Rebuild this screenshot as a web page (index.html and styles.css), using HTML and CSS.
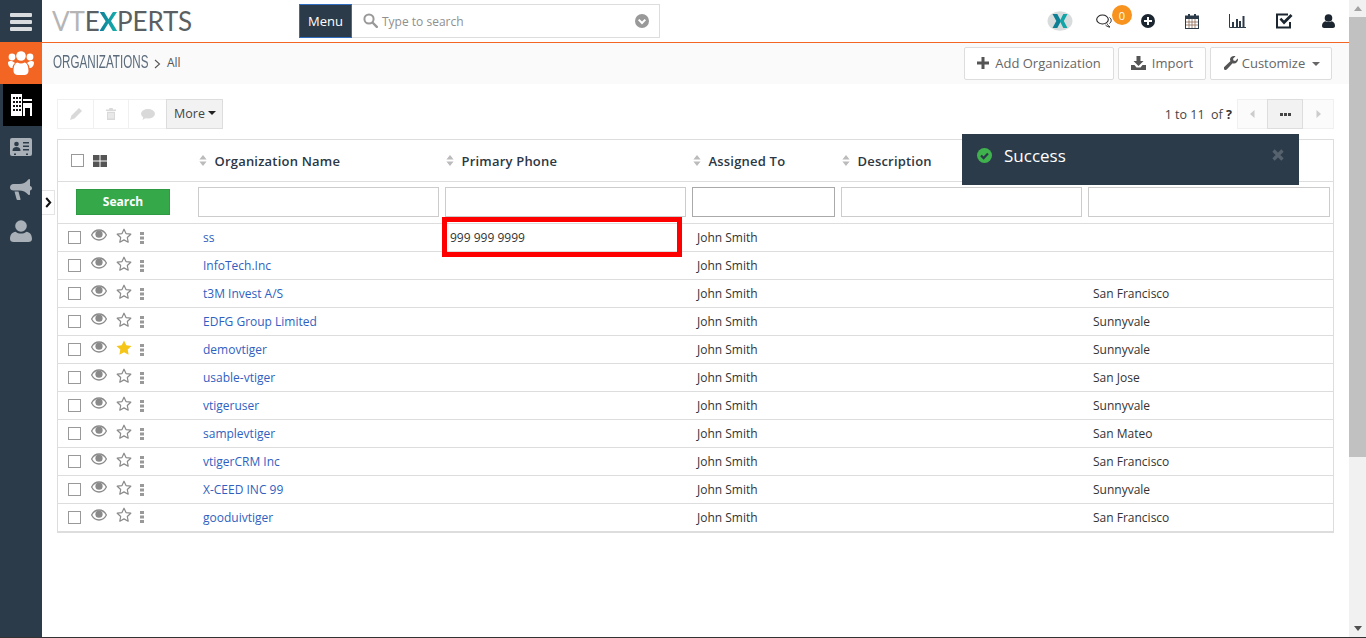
FILE: index.html
```html
<!DOCTYPE html>
<html lang="en">
<head>
<meta charset="utf-8">
<title>Organizations</title>
<link rel="stylesheet" href="styles.css">
</head>
<body>
<svg class="defs" aria-hidden="true">
  <symbol id="i-eye" viewBox="0 0 16 12"><path d="M.6 6C2.4 2.6 5 1 8 1s5.600 1.600 7.400 5C13.600 9.400 11 11 8 11S2.400 9.400.6 6z" fill="none" stroke="currentColor" stroke-width="1.300"/><circle cx="8" cy="5.200" r="3.600" fill="currentColor"/></symbol>
  <symbol id="i-star" viewBox="0 0 16 15"><path d="M8 1.200l2 4.400 4.800.6-3.500 3.300.9 4.700L8 11.900l-4.200 2.300.9-4.700L1.200 6.200 6 5.600z" fill="none" stroke="currentColor" stroke-width="1.200" stroke-linejoin="round"/></symbol>
  <symbol id="i-star-f" viewBox="0 0 16 15"><path d="M8 .6l2.300 4.700 5.200.7-3.800 3.600.9 5.100L8 12.200l-4.600 2.500.9-5.100L.5 6l5.200-.7z" fill="currentColor"/></symbol>
  <symbol id="i-dots" viewBox="0 0 4 12"><path d="M0 0h4v3H0zM0 4.500h4v3H0zM0 9h4v3H0z" fill="currentColor"/></symbol>
  <symbol id="i-sort" viewBox="0 0 8 11"><path d="M4 0l3.600 4.400H.4zM4 11L.4 6.600h7.200z" fill="currentColor"/></symbol>
</svg>

<div class="app">
  <aside class="side">
    <div class="side-head">
      <span class="bar"></span><span class="bar"></span><span class="bar"></span>
    </div>
    <div class="side-item side-org">
      <svg width="26" height="24" viewBox="0 0 26 24"><g fill="#fff"><circle cx="4" cy="6" r="3.400"/><circle cx="22" cy="6" r="3.400"/><circle cx="13" cy="5" r="4.800"/><path d="M0 11.500c0-1 1.500-1.500 3-1.500 2 0 2.500 1 4 2-1.500 1-2.500 3-2.500 5C2 17 0 15 0 11.500zM26 11.500c0-1-1.500-1.500-3-1.500-2 0-2.500 1-4 2 1.500 1 2.500 3 2.500 5 2.500 0 4.500-2 4.500-5.500z"/><path d="M5.500 20c0-5 1.500-8 4-8.500 2 1.200 5 1.200 7 0 2.500.5 4 3.500 4 8.500 0 2.500-2 4-4 4h-7c-2 0-4-1.500-4-4z"/></g></svg>
    </div>
    <div class="side-item side-active">
      <svg width="21" height="22" viewBox="0 0 21 22"><path d="M0 0h11v22H0z" fill="#fff"/><path d="M2 3h2v2H2zM5 3h2v2H5zM8 3h2v2H8zM2 7h2v2H2zM5 7h2v2H5zM8 7h2v2H8zM2 11h2v2H2zM5 11h2v2H5zM8 11h2v2H8zM2 15h2v2H2zM5 15h2v2H5zM8 15h2v2H8z" fill="#111"/><path d="M12 5h9v2h-9zM12 9h9v13h-2v-8h-5v8h-2z" fill="#fff"/></svg>
    </div>
    <div class="side-item">
      <svg width="22" height="18" viewBox="0 0 22 18"><rect width="22" height="18" rx="2" fill="#a9b0b7"/><circle cx="6.500" cy="6" r="2.300" fill="#2c3b49"/><path d="M2.500 13c0-3 1.500-4 4-4s4 1 4 4zM13 4h6v1.500h-6zM13 7.500h6V9h-6zM13 11h6v1.500h-6z" fill="#2c3b49"/><path d="M4 15.500h2V17H4zM16 15.500h2V17h-2z" fill="#2c3b49"/></svg>
    </div>
    <div class="side-item">
      <svg width="22" height="21" viewBox="0 0 22 21"><path d="M19 0c.8 0 1 .6 1 1v6c1.200.3 2 1.200 2 2.300s-.8 2-2 2.300V15c0 .6-.4 1-1 1-.3 0-.5-.1-.7-.3C16 13 13 11.500 9 11.500H3.500C1.500 11.500 0 10.500 0 8.500S1.500 5 3.500 5H9c4 0 7-1.500 9.300-4.500.2-.3.4-.5.7-.5z" fill="#a9b0b7"/><path d="M4.500 12.500h4l2 7.500c.2.700-.3 1-.8 1H7.500c-.4 0-.8-.2-.9-.7z" fill="#a9b0b7"/></svg>
    </div>
    <div class="side-item">
      <svg width="22" height="22" viewBox="0 0 22 22"><circle cx="11" cy="6" r="5.800" fill="#a9b0b7"/><path d="M0 19c0-4.500 2.500-7 5.500-7.300C7 13 9 13.500 11 13.500s4-.5 5.500-1.800c3 .3 5.500 2.800 5.500 7.300 0 2-1.500 3-3.500 3h-15C1.500 22 0 21 0 19z" fill="#a9b0b7"/></svg>
    </div>
  </aside>

  <div class="main">
    <header class="top">
      <div class="logo"><span class="logo-v">VT</span><span class="logo-e">E</span><span class="logo-x">X</span><span class="logo-e">PERTS</span></div>
      <div class="menu-btn">Menu</div>
      <div class="search">
        <svg class="search-ico" width="15" height="15" viewBox="0 0 15 15"><circle cx="6" cy="6" r="4.600" fill="none" stroke="#999" stroke-width="2"/><path d="M9.500 9.500l4.300 4.300" stroke="#999" stroke-width="2.400" stroke-linecap="round"/></svg>
        <span class="search-text">Type to search</span>
        <svg width="14" height="14" viewBox="0 0 14 14"><circle cx="7" cy="7" r="7" fill="#999"/><path d="M3.700 5.600L7 9l3.300-3.400" fill="none" stroke="#fff" stroke-width="2"/></svg>
      </div>
      <nav class="top-icons">
        <div class="ti">
          <svg width="26" height="20" viewBox="0 0 26 20"><ellipse cx="13" cy="10" rx="12.500" ry="9.800" fill="#d9dcdc"/><path d="M5.500 3h4.800l3.700 7-3.700 7H5.500l3.800-7z" fill="#0d7f95"/><path d="M20.500 3h-4.200L12.800 10l3.500 7h4.200l-3.700-7z" fill="#12a5a8"/></svg>
        </div>
        <div class="ti">
          <svg width="16" height="14" viewBox="0 0 16 14"><ellipse cx="6.500" cy="5.500" rx="5.800" ry="4.500" fill="#fff" stroke="#222" stroke-width="1.100"/><path d="M11 9.500c.5 1.500 2 3 3 3.500-1.500 0-3-.5-4.500-2" fill="none" stroke="#222"/><path d="M13.500 3.500c1.500 1 2 2.500 1.500 4-.3 1-1 1.500-1.500 2" fill="none" stroke="#222"/></svg>
          <span class="badge">0</span>
        </div>
        <div class="ti">
          <svg width="14" height="14" viewBox="0 0 14 14"><circle cx="7" cy="7" r="7" fill="#1c2630"/><path d="M6 3h2v3h3v2H8v3H6V8H3V6h3z" fill="#fff"/></svg>
        </div>
        <div class="ti">
          <svg width="14" height="15" viewBox="0 0 14 15"><rect x=".5" y="2" width="13" height="12.500" fill="#fff" stroke="#2c3b49"/><path d="M0 2h14v3H0zM3 0h2v3H3zM9 0h2v3H9z" fill="#2c3b49"/><path d="M1 8h12M1 11h12M4 5v9M7 5v9M10 5v9" stroke="#8a6b55" stroke-width=".8"/></svg>
        </div>
        <div class="ti ti-chart">
          <svg width="17" height="14" viewBox="0 0 17 14"><path d="M.5 0v13.500H17" fill="none" stroke="#2c3b49"/><path d="M3 8h2v5H3zM7 5h2v8H7zM10 7h2v6h-2zM13.500 2h2v11h-2z" fill="#2c3b49"/></svg>
        </div>
        <div class="ti ti-check">
          <svg width="17" height="16" viewBox="0 0 17 16"><path d="M14 9v5.500H1v-13h11" fill="none" stroke="#1c2630" stroke-width="2"/><path d="M3.500 6.500l1.800-1.700 2.700 2.700L14.500 1 16.500 3 8 11.500z" fill="#1c2630"/></svg>
        </div>
        <div class="ti ti-user">
          <svg width="13" height="14" viewBox="0 0 13 14"><circle cx="6.500" cy="4" r="3.800" fill="#1c2630"/><path d="M0 12c0-3 1.500-4.500 3.500-4.800 1.800 1.200 4.200 1.200 6 0 2 .3 3.500 1.800 3.500 4.800 0 1.200-1 2-2 2H2c-1 0-2-.8-2-2z" fill="#1c2630"/></svg>
        </div>
      </nav>
    </header>

    <div class="titlebar">
      <span class="mod-name">ORGANIZATIONS</span>
      <svg class="crumb-ico" width="7" height="10" viewBox="0 0 7 10"><path d="M1 1l4.500 4L1 9" fill="none" stroke="#555" stroke-width="1.100"/></svg>
      <span class="crumb">All</span>
      <div class="title-actions">
        <button class="btn btn-add"><svg width="12" height="12" viewBox="0 0 12 12"><path d="M4.500 0h3v4.500H12v3H7.500V12h-3V7.500H0v-3h4.500z" fill="#555"/></svg>Add Organization</button>
        <button class="btn btn-imp"><svg width="15" height="14" viewBox="0 0 15 14"><path d="M5.500 0h4v5h3L7.500 10l-5-5h3z" fill="#555"/><path d="M0 9h3.500l2 2.500h4L11.500 9H15v5H0z" fill="#555"/></svg>Import</button>
        <button class="btn btn-cus"><svg width="14" height="14" viewBox="0 0 14 14"><path d="M14 3.500c0 2.200-1.800 4-4 4-.5 0-1-.1-1.400-.3L3 13.300c-.8.900-2 .9-2.700.1-.7-.7-.7-1.900.2-2.700l6-5.600C6.100 4.600 6 4.100 6 3.500 6 1.500 7.800 0 10 0c.6 0 1.100.1 1.500.3L9 2.800 9.500 4.600l1.800.5 2.400-2.500c.2.300.3.600.3.900z" fill="#555"/></svg>Customize<span class="caret caret-wide"></span></button>
      </div>
    </div>

    <div class="content">
      <div class="toolbar">
        <div class="tool-group">
          <div class="tool tool-a"><svg width="12" height="12" viewBox="0 0 12 12"><path d="M9 0l3 3-7.500 7.500L0 12l1.500-4.500z" fill="#d9d9d9"/></svg></div>
          <div class="tool tool-b"><svg width="10" height="12" viewBox="0 0 10 12"><path d="M0 1.500h3.200V0h3.600v1.500H10V3H0zM1 3.800h8V12H1z" fill="#d9d9d9"/><path d="M3 5v5.500M5 5v5.500M7 5v5.500" stroke="#fff" stroke-width=".8"/></svg></div>
          <div class="tool tool-c"><svg width="14" height="11" viewBox="0 0 14 11"><ellipse cx="7" cy="4.800" rx="7" ry="4.800" fill="#d9d9d9"/><path d="M2.500 7.500L1.500 11l4-2.500z" fill="#d9d9d9"/></svg></div>
          <div class="tool tool-more tool-more-text">More<span class="caret caret-dark"></span></div>
        </div>
        <div class="paging">
          <span class="paging-text">1 to 11&nbsp; of <b>?</b></span>
          <div class="tool page-prev"><svg width="5" height="8" viewBox="0 0 5 8"><path d="M4.500 0v8L0 4z" fill="#ccc"/></svg></div>
          <div class="tool tool-more page-mid"><svg width="11" height="3" viewBox="0 0 11 3"><path d="M0 0h3v3H0zM4 0h3v3H4zM8 0h3v3H8z" fill="#444"/></svg></div>
          <div class="tool page-next"><svg width="5" height="8" viewBox="0 0 5 8"><path d="M.5 0v8L5 4z" fill="#ccc"/></svg></div>
        </div>
      </div>

      <table class="list">
        <colgroup><col class="c-act"><col class="c-wide"><col class="c-wide"><col class="c-mid"><col class="c-wide"><col class="c-last"></colgroup>
        <thead>
          <tr class="head-row">
            <th>
              <div class="head-act">
                <span class="cb"></span>
                <svg width="14" height="12" viewBox="0 0 14 12"><path d="M0 0h6.500v5.500H0zM7.500 0H14v5.500H7.500zM0 6.500h6.500V12H0zM7.500 6.500H14V12H7.500z" fill="#555"/></svg>
              </div>
            </th>
            <th><span class="hlabel"><svg class="sort" width="8" height="11"><use href="#i-sort"/></svg>Organization Name</span></th>
            <th><span class="hlabel"><svg class="sort" width="8" height="11"><use href="#i-sort"/></svg>Primary Phone</span></th>
            <th><span class="hlabel"><svg class="sort" width="8" height="11"><use href="#i-sort"/></svg>Assigned To</span></th>
            <th><span class="hlabel"><svg class="sort" width="8" height="11"><use href="#i-sort"/></svg>Description</span></th>
            <th></th>
          </tr>
          <tr class="filter-row">
            <td><button class="search-btn">Search</button></td>
            <td><input class="fi" type="text"></td>
            <td><input class="fi" type="text"></td>
            <td><input class="fi fi-dark" type="text"></td>
            <td><input class="fi" type="text"></td>
            <td><input class="fi" type="text"></td>
          </tr>
        </thead>
        <tbody>
          <tr><td><div class="ract"><span class="cb cb-row"></span><svg class="eye" width="16" height="12"><use href="#i-eye"/></svg><svg class="star" width="16" height="15"><use href="#i-star"/></svg><svg class="dots" width="4" height="12"><use href="#i-dots"/></svg></div></td><td><a class="lnk">ss</a></td><td class="phone-cell">999 999 9999<span class="mark"></span></td><td>John Smith</td><td></td><td></td></tr>
          <tr><td><div class="ract"><span class="cb cb-row"></span><svg class="eye" width="16" height="12"><use href="#i-eye"/></svg><svg class="star" width="16" height="15"><use href="#i-star"/></svg><svg class="dots" width="4" height="12"><use href="#i-dots"/></svg></div></td><td><a class="lnk">InfoTech.Inc</a></td><td></td><td>John Smith</td><td></td><td></td></tr>
          <tr><td><div class="ract"><span class="cb cb-row"></span><svg class="eye" width="16" height="12"><use href="#i-eye"/></svg><svg class="star" width="16" height="15"><use href="#i-star"/></svg><svg class="dots" width="4" height="12"><use href="#i-dots"/></svg></div></td><td><a class="lnk">t3M Invest A/S</a></td><td></td><td>John Smith</td><td></td><td>San Francisco</td></tr>
          <tr><td><div class="ract"><span class="cb cb-row"></span><svg class="eye" width="16" height="12"><use href="#i-eye"/></svg><svg class="star" width="16" height="15"><use href="#i-star"/></svg><svg class="dots" width="4" height="12"><use href="#i-dots"/></svg></div></td><td><a class="lnk">EDFG Group Limited</a></td><td></td><td>John Smith</td><td></td><td>Sunnyvale</td></tr>
          <tr><td><div class="ract"><span class="cb cb-row"></span><svg class="eye" width="16" height="12"><use href="#i-eye"/></svg><svg class="star star-on" width="16" height="15"><use href="#i-star-f"/></svg><svg class="dots" width="4" height="12"><use href="#i-dots"/></svg></div></td><td><a class="lnk">demovtiger</a></td><td></td><td>John Smith</td><td></td><td>Sunnyvale</td></tr>
          <tr><td><div class="ract"><span class="cb cb-row"></span><svg class="eye" width="16" height="12"><use href="#i-eye"/></svg><svg class="star" width="16" height="15"><use href="#i-star"/></svg><svg class="dots" width="4" height="12"><use href="#i-dots"/></svg></div></td><td><a class="lnk">usable-vtiger</a></td><td></td><td>John Smith</td><td></td><td>San Jose</td></tr>
          <tr><td><div class="ract"><span class="cb cb-row"></span><svg class="eye" width="16" height="12"><use href="#i-eye"/></svg><svg class="star" width="16" height="15"><use href="#i-star"/></svg><svg class="dots" width="4" height="12"><use href="#i-dots"/></svg></div></td><td><a class="lnk">vtigeruser</a></td><td></td><td>John Smith</td><td></td><td>Sunnyvale</td></tr>
          <tr><td><div class="ract"><span class="cb cb-row"></span><svg class="eye" width="16" height="12"><use href="#i-eye"/></svg><svg class="star" width="16" height="15"><use href="#i-star"/></svg><svg class="dots" width="4" height="12"><use href="#i-dots"/></svg></div></td><td><a class="lnk">samplevtiger</a></td><td></td><td>John Smith</td><td></td><td>San Mateo</td></tr>
          <tr><td><div class="ract"><span class="cb cb-row"></span><svg class="eye" width="16" height="12"><use href="#i-eye"/></svg><svg class="star" width="16" height="15"><use href="#i-star"/></svg><svg class="dots" width="4" height="12"><use href="#i-dots"/></svg></div></td><td><a class="lnk">vtigerCRM Inc</a></td><td></td><td>John Smith</td><td></td><td>San Francisco</td></tr>
          <tr><td><div class="ract"><span class="cb cb-row"></span><svg class="eye" width="16" height="12"><use href="#i-eye"/></svg><svg class="star" width="16" height="15"><use href="#i-star"/></svg><svg class="dots" width="4" height="12"><use href="#i-dots"/></svg></div></td><td><a class="lnk">X-CEED INC 99</a></td><td></td><td>John Smith</td><td></td><td>Sunnyvale</td></tr>
          <tr><td><div class="ract"><span class="cb cb-row"></span><svg class="eye" width="16" height="12"><use href="#i-eye"/></svg><svg class="star" width="16" height="15"><use href="#i-star"/></svg><svg class="dots" width="4" height="12"><use href="#i-dots"/></svg></div></td><td><a class="lnk">gooduivtiger</a></td><td></td><td>John Smith</td><td></td><td>San Francisco</td></tr>
        </tbody>
      </table>

      <div class="expander"><svg width="7" height="11" viewBox="0 0 7 11"><path d="M1.200 1l4 4.500-4 4.500" fill="none" stroke="#111" stroke-width="2"/></svg></div>
    </div>
  </div>

  <div class="scrollbar">
    <span class="sb-up"></span>
    <div class="sb-track"><div class="sb-thumb"></div></div>
    <span class="sb-down"></span>
  </div>
</div>
<div class="baseline"></div>

<div class="toast">
  <svg width="15" height="15" viewBox="0 0 15 15"><circle cx="7.500" cy="7.500" r="7.500" fill="#3fb24d"/><path d="M4 7.500l2.600 2.600L11 5.500" fill="none" stroke="#2c3b4a" stroke-width="2.200"/></svg>
  <span class="toast-text">Success</span>
  <svg class="toast-x" width="12" height="12" viewBox="0 0 12 12"><path d="M1.500 1.500l9 9M10.500 1.500l-9 9" stroke="#56626e" stroke-width="3.200"/></svg>
</div>
</body>
</html>
```
FILE: styles.css
```css
* { box-sizing: border-box; }
html, body { margin: 0; padding: 0; height: 638px; overflow: hidden; background: #fff; }
body { font-family: "Open Sans", "Liberation Sans", sans-serif; font-size: 12px; color: #333; position: relative; }
.defs { display: none; }
.app { display: flex; height: 637px; }
.baseline { height: 1px; background: #333; }

/* sidebar */
.side { width: 42px; flex: none; background: #2c3b49; display: flex; flex-direction: column; }
.side-head { height: 42px; display: flex; flex-direction: column; align-items: center; justify-content: center; gap: 3px; padding-top: 1px; }
.bar { width: 22px; height: 4px; border-radius: 1px; background: #d8dcdf; }
.side-item { height: 42px; display: flex; align-items: center; justify-content: center; }
.side-org { background: #f26522; }
.side-active { background: #000; margin-left: 3px; padding-right: 3px; }

/* main */
.main { flex: 1; min-width: 0; position: relative; }
.top { height: 43px; border-bottom: 1px solid #f26522; display: flex; align-items: center; }
.logo { width: 257px; padding-left: 10px; font-family: Lato, sans-serif; font-weight: 400; font-size: 26px; letter-spacing: -.15px; line-height: 30px; white-space: nowrap; margin-top: -1px; }
.logo-v { color: #b5b5b5; }
.logo-e { color: #5a5f63; }
.logo-x { font-weight: 900; background: linear-gradient(90deg, #0f7f98, #14b0ac); -webkit-background-clip: text; background-clip: text; color: transparent; }
.menu-btn { width: 53px; height: 34px; background: #2c3b49; border: 1px solid #2f6ec0; color: #fff; font-size: 13px; display: flex; align-items: center; justify-content: center; margin-top: -1px; padding-top: 1px; }
.search { width: 308px; height: 34px; border: 1px solid #ddd; border-left: 0; display: flex; align-items: center; padding: 0 10px 0 11px; margin-top: -1px; }
.search-text { flex: 1; margin-left: 4px; color: #8f8f8f; font-size: 12px; padding-top: 1px; }
.top-icons { margin-left: auto; display: flex; align-items: center; padding-right: 1px; }
.ti { width: 44px; height: 30px; display: flex; align-items: center; justify-content: center; position: relative; }
.ti-chart { width: 46px; }
.ti-check { width: 48px; }
.ti-user { width: 40px; }
.badge { position: absolute; left: 30px; top: -1px; width: 20px; height: 20px; border-radius: 50%; background: #f7931e; color: #fff; font-size: 11px; display: flex; align-items: center; justify-content: center; }

/* title bar */
.titlebar { height: 41px; background: #fafafa; display: flex; align-items: center; padding: 0 17px 0 11px; }
.mod-name { width: 95px; flex: none; font-family: "Liberation Sans", sans-serif; font-size: 18px; color: #5b6b7c; white-space: nowrap; transform: scaleX(.646); transform-origin: 0 50%; margin-top: -2px; }
.crumb-ico { margin: 0 6px; }
.crumb { font-size: 12px; color: #555; padding-bottom: 2px; }
.title-actions { margin-left: auto; display: flex; gap: 4px; }
.btn { height: 33px; background: #fff; border: 1px solid #ddd; border-radius: 2px; font-family: inherit; font-size: 13px; color: #666; display: flex; align-items: center; padding: 0 0 2px; justify-content: center; }
.btn-add { width: 150px; gap: 6px; }
.btn-imp { width: 88px; gap: 6px; }
.btn-cus { width: 122px; gap: 4px; padding-left: 2px; }
.caret { display: inline-block; width: 0; height: 0; border: 4px solid transparent; border-top-color: #666; border-bottom: 0; }
.caret-wide { margin-left: 3px; margin-top: 2px; }
.caret-dark { border-top-color: #222; margin-left: 3px; }

/* content */
.content { padding: 15px 15px 0; position: relative; }
.toolbar { height: 30px; margin-bottom: 10px; display: flex; justify-content: space-between; }
.tool-group { display: flex; }
.tool { height: 30px; border: 1px solid #f0f0f0; border-right: 0; background: #fff; display: flex; align-items: center; justify-content: center; }
.tool-a { width: 36px; }
.tool-b { width: 35px; }
.tool-c { width: 38px; }
.tool-more { background: #f2f2f2; border: 1px solid #ddd; width: 57px; font-size: 12.500px; color: #444; }
.tool-more-text { padding: 0 0 2px 1px; }
.paging { display: flex; align-items: center; }
.paging-text { color: #444; margin-right: 5px; font-size: 12.500px; }
.paging-text b { color: #333; }
.page-prev { width: 30px; background: #fbfbfb; }
.page-mid { width: 36px; }
.page-next { width: 31px; background: #fbfbfb; border-right: 1px solid #f0f0f0; border-left: 0; }

/* table */
.list { width: 1276px; table-layout: fixed; border-collapse: collapse; border: 1px solid #ddd; }
.c-act { width: 137px; }
.c-wide { width: 247px; }
.c-mid { width: 149px; }
.c-last { width: 249px; }
.list td, .list th { padding: 0; border-bottom: 1px solid #ddd; font-weight: 400; text-align: left; }
.list tbody tr { height: 28px; }
.list tbody tr:last-child td { border-bottom-width: 2px; }
.list tbody td { padding-left: 8.500px; }
.list tbody td:first-child { padding-left: 10px; }
.head-row { height: 42px; }
.filter-row { height: 42px; }
.list .filter-row td { padding: 0 3px 2px; }
.head-act { display: flex; align-items: center; gap: 9px; padding-left: 13px; }
.cb { width: 13px; height: 13px; border: 1px solid #999; background: #fff; flex: none; }
.hlabel { display: flex; align-items: center; font-weight: 600; font-size: 13px; color: #2b3744; padding-left: 4px; letter-spacing: .2px; }
.sort { color: #bbb; margin-right: 8px; }
.search-btn { width: 94px; height: 26px; margin-left: 15px; display: block; background: #35a84a; border: 1px solid #2f9a44; color: #fff; font-family: inherit; font-size: 12px; font-weight: 700; padding: 0; }
.fi { display: block; width: 100%; height: 30px; border: 1px solid #ccc; background: #fff; margin: 0; padding: 0; }
.fi-dark { border-color: #aaa; }
.ract { display: flex; align-items: center; }
.eye { color: #8a8a8a; margin: -5px 0 0 10px; }
.star { color: #8a8a8a; margin: -5px 0 0 9px; }
.star-on { color: #f5c518; }
.dots { color: #999; margin-left: 8px; }
.lnk { color: #2f5fc0; }
.phone-cell { position: relative; }
.mark { position: absolute; left: 0; top: -7px; width: 240px; height: 40px; border: 5px solid #f00; }
.expander { position: absolute; left: 0; top: 106px; width: 13px; height: 25px; background: #fff; border: 1px solid #e4e4e4; border-left: 0; display: flex; align-items: center; justify-content: center; }

/* scrollbar */
.scrollbar { width: 17px; flex: none; background: #f1f1f1; display: flex; flex-direction: column; align-items: center; }
.sb-up, .sb-down { flex: none; width: 0; height: 0; border: 4px solid transparent; }
.sb-up { border-bottom: 5px solid #a3a3a3; border-top: 0; margin: 6px 0; }
.sb-down { border-top: 5px solid #505050; border-bottom: 0; margin: 6px 0; }
.sb-track { flex: 1; align-self: stretch; }
.sb-thumb { height: 440px; background: #c1c1c1; }

/* toast */
.toast { position: absolute; left: 962px; top: 134px; width: 337px; height: 51px; background: #2c3b4a; display: flex; align-items: center; padding: 0 15px 9px; }
.toast-text { margin-left: 12px; font-size: 17px; color: #fff; flex: 1; }
.toast-x { margin-top: 0; }
```
